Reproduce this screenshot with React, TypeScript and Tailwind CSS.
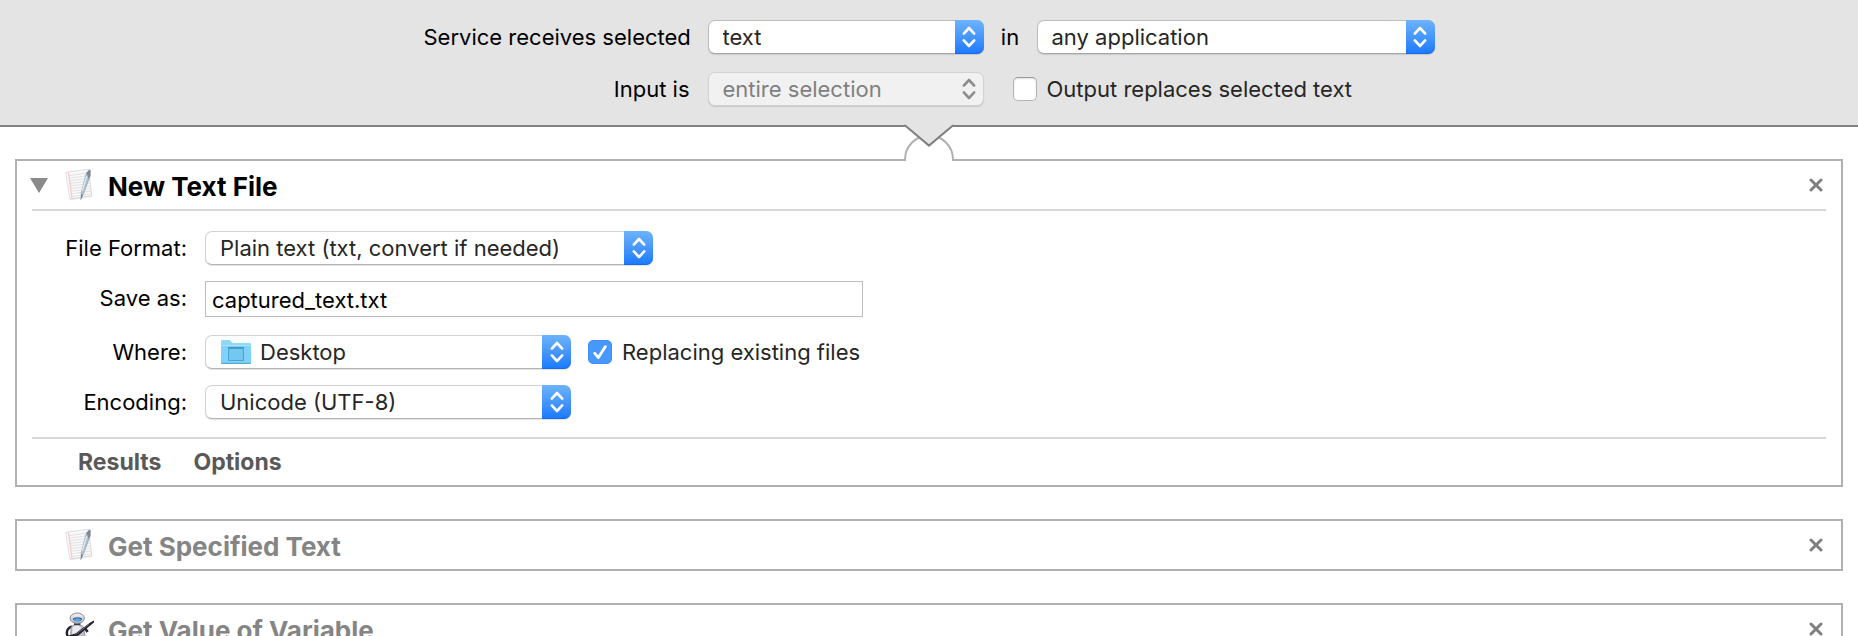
import React, { useId } from "react";

function Chevrons() {
  return (
    <svg width="28" height="34" viewBox="0 0 28 34" fill="none" stroke="currentColor" strokeWidth="2.6" strokeLinecap="round" strokeLinejoin="round">
      <path d="M8.8 13.6 14 8 19.2 13.6" />
      <path d="M8.8 20.4 14 26 19.2 20.4" />
    </svg>
  );
}

type PopUpProps = {
  id?: string;
  options: string[];
  width: string;
  disabled?: boolean;
  onGray?: boolean;
  icon?: React.ReactNode;
};

function PopUp({ id, options, width, disabled, onGray, icon }: PopUpProps) {
  const look = disabled
    ? "border-[#d2d2d2] bg-[#f1f1f1] text-[#808080] disabled:opacity-100"
    : onGray
      ? "border-[#bdbdbd] border-b-[#a8a8a8] bg-white text-[#262626]"
      : "border-[#d2d2d2] border-b-[#b4b4b4] bg-white text-[#262626]";
  return (
    <div className={`relative h-[34px] shrink-0 ${width}`}>
      <select
        id={id}
        disabled={disabled}
        className={`h-full w-full appearance-none rounded-[7px] border pr-8 shadow-[0_1px_1px_rgba(0,0,0,0.12)] outline-none ${icon ? "pl-[54px]" : "pl-[14px]"} ${look}`}
      >
        {options.map((o) => (
          <option key={o}>{o}</option>
        ))}
      </select>
      {icon && <span className="pointer-events-none absolute top-1 left-4">{icon}</span>}
      <span
        className={`pointer-events-none absolute inset-y-0 right-0 flex w-[29px] items-center justify-center rounded-r-[7px] ${
          disabled ? "text-[#8e8e8e]" : "border-b border-[#1767f0] bg-linear-to-b from-[#6db3fa] to-[#1a7aff] text-white"
        }`}
      >
        <Chevrons />
      </span>
    </div>
  );
}

function CheckBox({ label, checked }: { label: string; checked?: boolean }) {
  const id = useId();
  return (
    <div className="flex items-center gap-[10px] text-[#262626]">
      <span className="relative flex size-6">
        <input
          id={id}
          type="checkbox"
          defaultChecked={checked}
          className="peer size-6 appearance-none rounded-[5px] border border-[#b4b4b4] border-t-[#9a9a9a] bg-white shadow-[inset_0_1px_2px_rgba(0,0,0,0.12)] checked:border-[#3f91f8] checked:bg-[#4698fb] checked:shadow-none"
        />
        <svg className="pointer-events-none absolute inset-0 hidden peer-checked:block" width="24" height="24" viewBox="0 0 24 24" fill="none" stroke="white" strokeWidth="2.8" strokeLinecap="round" strokeLinejoin="round">
          <path d="M6.6 13.2 10.4 17.6 17.4 6.6" />
        </svg>
      </span>
      <label htmlFor={id} className="whitespace-nowrap">
        {label}
      </label>
    </div>
  );
}

function NotepadIcon() {
  return (
    <svg width="32" height="34" viewBox="0 0 32 34" fill="none">
      <path d="M2.6 4.6 24.6 2 28.4 28.6 6.4 32Z" fill="#000" opacity=".14" />
      <path d="M1.6 4.4 24.6 1.2 27.4 27.8 5.8 30.8Z" fill="#fafafa" stroke="#d8d8d8" strokeWidth=".8" />
      <path d="M5 7.6 24 5M5.4 10.2 24.4 7.6M5.8 12.8 24.6 10.2M6.2 15.4 25 12.8M6.6 18 25.2 15.4M7 20.6 25.6 18M7.4 23.2 25.8 20.6M7.8 25.8 26.2 23.2M8.2 28.4 26.4 25.8" stroke="#dcdddf" strokeWidth=".9" />
      <path d="M4.4 4.2 8 30.4" stroke="#f8c6c6" strokeWidth="1.2" />
      <path d="M22.4 5 26 2.4 26.2 8 19.8 25 16.8 31.6 17.4 24Z" fill="#a9bfce" stroke="#8596a2" strokeWidth=".5" />
      <path d="M22.6 4.6 25.4 1.4 26.6 2 26.4 8 24.6 11Z" fill="#7d8a94" />
      <path d="M17.4 26 16.8 31.6 19 27Z" fill="#777d82" />
      <path d="M22.8 8 18.4 23" stroke="#e0edf6" strokeWidth="1.2" />
    </svg>
  );
}

function RobotIcon() {
  return (
    <svg width="32" height="34" viewBox="0 0 32 34" fill="none">
      <defs>
        <linearGradient id="robot-head" x1="0" y1="0" x2="0" y2="1">
          <stop offset="0" stopColor="#f4f4f6" />
          <stop offset="1" stopColor="#b9bac2" />
        </linearGradient>
      </defs>
      <path d="M8.4 14.6C4.2 15 1.6 19 3.6 24.4" stroke="#23242a" strokeWidth="2.4" />
      <path d="M7.2 15C9.4 12 17.4 12 19.6 15L21.4 26H6.4Z" fill="#bdbec8" stroke="#7d7e88" strokeWidth=".7" />
      <path d="M8.6 15.4C10.4 13.2 15.2 13.2 17 15.4L13 22.4 8 23.6Z" fill="#ececf0" />
      <path d="M10 11h6.4v2H10z" fill="#3c3d44" />
      <ellipse cx="13.2" cy="6.2" rx="7.2" ry="5.2" fill="url(#robot-head)" stroke="#7d7e88" strokeWidth=".9" />
      <path d="M8.8 6.8C10.4 5 16.8 5 18.2 6.8 17.4 10.2 9.8 10.2 8.8 6.8Z" fill="#1c3f74" />
      <path d="M9.6 7.4C11.4 6 15.4 6 17.4 7.4 15.6 9.8 11.4 9.8 9.6 7.4Z" fill="#4fa9f6" />
      <path d="M4.4 23.4 11.4 21.4 26.2 10.4 30 8.6 30 10.4 26 13.8 12 25.4 6 27Z" fill="#26262f" />
      <path d="M11.6 22.4 25 12.4" stroke="#70717d" strokeWidth=".9" />
      <path d="M21.2 16.4 23.6 20" stroke="#26262f" strokeWidth="2.6" />
      <path d="M8 27 6 33M18.4 26 20.4 33" stroke="#35363e" strokeWidth="3" />
    </svg>
  );
}

function DesktopFolderIcon() {
  return (
    <svg width="30" height="26" viewBox="0 0 30 26">
      <path d="M0 24.4V2.4Q0 1 1.4 1H8.6L11.6 4H28.6Q30 4 30 5.2V24.4Z" fill="#8ed8f8" />
      <path d="M0 6.4H30V23.6Q30 24.6 29 24.6H1Q0 24.6 0 23.6Z" fill="#7fd2f9" />
      <path d="M0 6.4H30" stroke="#b5e8fd" strokeWidth=".8" />
      <path d="M.4 24.4H29.6" stroke="#58a9d2" strokeWidth="1.2" />
      <path d="M7.5 8.5H22.5V21.5H7.5Z" fill="#74c8f0" stroke="#49a3d3" strokeWidth="1" />
      <path d="M7.5 9H22.5" stroke="#3e95c6" strokeWidth="1.6" />
    </svg>
  );
}

function CloseButton({ title }: { title: string }) {
  return (
    <button type="button" aria-label={`Remove ${title}`} className="mr-[3px] ml-auto flex size-[14px] items-center justify-center text-[#7f7f7f]">
      <svg width="14" height="14" viewBox="0 0 14 14" stroke="currentColor" strokeWidth="3" strokeLinecap="round">
        <path d="M2 2 12 12M12 2 2 12" />
      </svg>
    </button>
  );
}

type ActionProps = { title: string; icon: React.ReactNode; expanded?: boolean; children?: React.ReactNode };

function Action({ title, icon, expanded, children }: ActionProps) {
  return (
    <section className="shrink-0 border-2 border-[#b0b0b0] bg-white px-[15px]">
      <header className="flex h-12 items-center">
        <div className="flex w-8 shrink-0">
          {expanded && (
            <button type="button" aria-label={`Collapse ${title}`} className="-ml-0.5 text-[#8a8a8a]">
              <svg width="18" height="15" viewBox="0 0 18 15" fill="currentColor">
                <path d="M0 0H18L9 15Z" />
              </svg>
            </button>
          )}
        </div>
        <span className="w-11 shrink-0">{icon}</span>
        <h2 className={`pt-[3px] text-[26px] leading-8 font-bold whitespace-nowrap ${expanded ? "text-black" : "text-[#858585]"}`}>{title}</h2>
        <CloseButton title={title} />
      </header>
      {children}
    </section>
  );
}

export default function App() {
  return (
    <div className="flex h-screen flex-col overflow-hidden bg-white font-['Inter','Liberation_Sans',sans-serif] text-[22px] leading-7 text-black">
      <div className="relative shrink-0 border-b-2 border-[#808080] bg-[#e4e4e4] pt-5 pb-[19px]">
        <div className="grid grid-cols-[266px_auto] items-center justify-center gap-x-[18px] gap-y-[18px]">
          <label htmlFor="receives" className="text-right whitespace-nowrap">
            Service receives selected
          </label>
          <div className="flex items-center">
            <PopUp id="receives" options={["text", "files or folders"]} width="w-[276px]" onGray />
            <label htmlFor="application" className="w-[53px] text-center">
              in
            </label>
            <PopUp id="application" options={["any application"]} width="w-[398px]" onGray />
          </div>
          <label htmlFor="input-is" className="text-right">
            Input is
          </label>
          <div className="flex items-center gap-[29px]">
            <PopUp id="input-is" options={["entire selection"]} width="w-[276px]" disabled />
            <CheckBox label="Output replaces selected text" />
          </div>
        </div>
        <svg className="absolute top-full left-1/2 z-10 -translate-x-1/2" width="52" height="36" viewBox="0 0 52 36" fill="none">
          <path d="M2 36V34A24 24 0 0 1 50 34V36Z" fill="#fff" />
          <path d="M2 36V34.5A24 24 0 0 1 50 34.5V36" stroke="#b0b0b0" strokeWidth="2" />
        </svg>
        <svg className="absolute top-full left-1/2 z-20 -translate-x-1/2" width="52" height="24" viewBox="0 0 52 24" fill="none" overflow="visible">
          <path d="M2 -1V1L26 20.6 50 1V-1Z" fill="#e4e4e4" />
          <path d="M2 -2.4H50V-.4H2Z" fill="#e4e4e4" />
          <path d="M1 .8 2.4 .8 26 20.6 49.6 .8 51 .8" stroke="#808080" strokeWidth="2" />
        </svg>
      </div>

      <main className="flex flex-col gap-8 px-[15px] pt-8">
        <Action title="New Text File" icon={<NotepadIcon />} expanded>
          <div className="grid grid-cols-[155px_1fr] items-center gap-x-[18px] gap-y-4 border-y-2 border-[#d6d6d6] pt-5 pb-[18px]">
            <label htmlFor="format" className="text-right">
              File Format:
            </label>
            <PopUp id="format" options={["Plain text (txt, convert if needed)"]} width="w-[448px]" />
            <label htmlFor="save-as" className="pb-1 text-right">
              Save as:
            </label>
            <input
              id="save-as"
              type="text"
              defaultValue="captured_text.txt"
              className="mb-0.5 h-9 w-[658px] border border-[#bcbcbc] bg-white px-1.5 pt-0.5 outline-none"
            />
            <label htmlFor="where" className="text-right">
              Where:
            </label>
            <div className="flex items-center gap-[17px]">
              <PopUp id="where" options={["Desktop"]} width="w-[366px]" icon={<DesktopFolderIcon />} />
              <CheckBox label="Replacing existing files" checked />
            </div>
            <label htmlFor="encoding" className="text-right">
              Encoding:
            </label>
            <PopUp id="encoding" options={["Unicode (UTF-8)"]} width="w-[366px]" />
          </div>
          <footer className="flex h-[46px] items-center gap-8 pl-[46px] text-[23px] font-bold text-[#595959]">
            <button type="button">Results</button>
            <button type="button">Options</button>
          </footer>
        </Action>
        <Action title="Get Specified Text" icon={<NotepadIcon />} />
        <Action title="Get Value of Variable" icon={<RobotIcon />} />
      </main>
    </div>
  );
}
